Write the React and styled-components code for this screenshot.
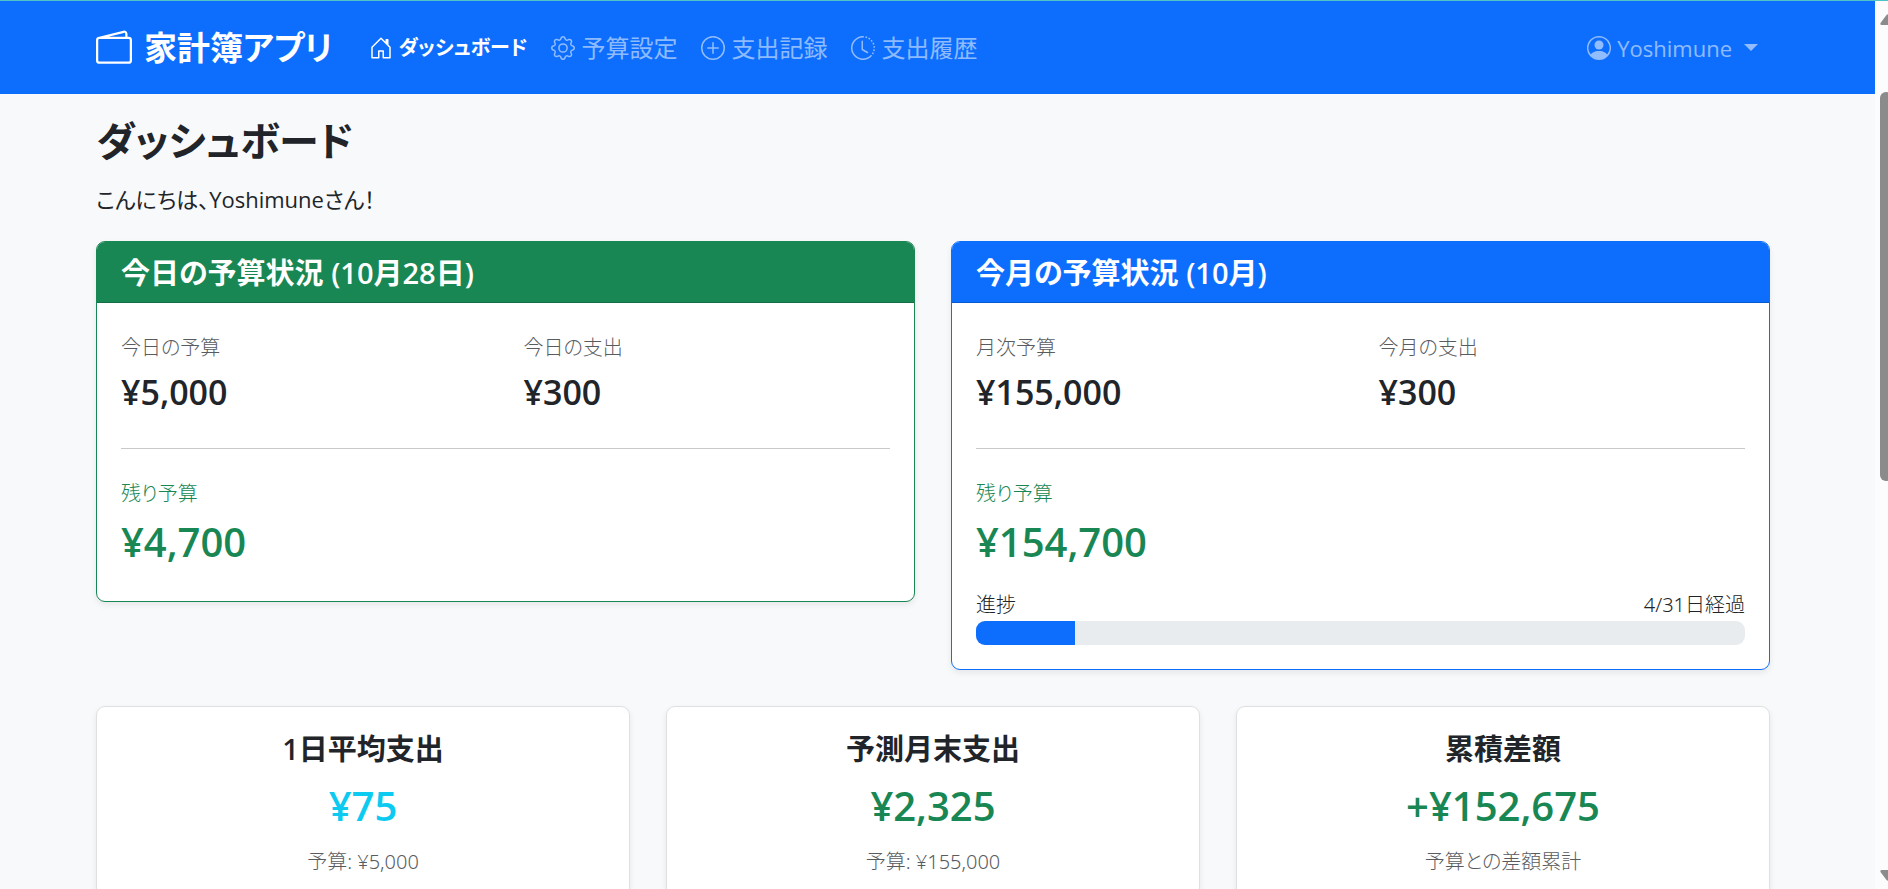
import React from 'react';
import styled, { createGlobalStyle } from 'styled-components';
import {
  BsWallet2,
  BsHouseDoor,
  BsGear,
  BsPlusCircle,
  BsClockHistory,
  BsPersonCircle,
} from 'react-icons/bs';

const color = {
  primary: '#0d6efd',
  success: '#198754',
  info: '#0dcaf0',
  text: '#212529',
  muted: '#595c5f',
};

const smallFont = '"Noto Sans", "Noto Sans CJK JP", sans-serif';

const GlobalStyle = createGlobalStyle`
  *, *::before, *::after { box-sizing: border-box; }
  body {
    margin: 0;
    background: #f8f9fb;
    color: ${color.text};
    font-family: "Open Sans", "Noto Sans CJK JP", sans-serif;
    font-size: 24px;
    line-height: 36px;
    font-feature-settings: "palt";
  }
  h1, h2, h3, p { margin: 0; }
`;

const Window = styled.div`
  display: flex;
  height: 100vh;
  border-top: 1px solid #4fc3c8;
  overflow: hidden;
`;

const Page = styled.div`
  flex: 1;
  min-width: 0;
  overflow-y: auto;
  scrollbar-width: none;
`;

const Container = styled.div`
  max-width: 1719px;
  margin: 0 auto;
  padding: 0 27px 0 18px;
`;

const Navbar = styled.header`
  background: ${color.primary};
  padding: 12px 0;
`;

const NavRow = styled(Container)`
  display: flex;
  align-items: center;
  height: 69px;
`;

const Brand = styled.a`
  display: flex;
  align-items: center;
  gap: 12px;
  margin-right: 24px;
  color: #fff;
  font-size: 33px;
  line-height: 54px;
  font-weight: 700;
  text-decoration: none;
  white-space: nowrap;

  svg {
    width: 36px;
    height: 36px;
  }
`;

const Nav = styled.nav`
  display: flex;
  flex: 1;
`;

const NavLink = styled.a`
  display: flex;
  align-items: center;
  gap: 6px;
  padding: 12px;
  color: ${(p) => (p.$active ? '#fff' : 'rgba(255, 255, 255, 0.55)')};
  font-size: ${(p) => (p.$active ? 20 : 24)}px;
  font-weight: ${(p) => (p.$active ? 700 : 400)};
  text-decoration: none;
  white-space: nowrap;

  svg {
    width: 24px;
    height: 24px;
  }
`;

const UserButton = styled.button`
  display: flex;
  align-items: center;
  gap: 6px;
  padding: 12px;
  border: 0;
  background: none;
  color: rgba(255, 255, 255, 0.55);
  font: inherit;
  font-size: 22px;
  cursor: pointer;

  svg {
    width: 24px;
    height: 24px;
  }
`;

const Caret = styled.span`
  margin-left: 6px;
  border-top: 7px solid;
  border-left: 7px solid transparent;
  border-right: 7px solid transparent;
`;

const Main = styled(Container).attrs({ as: 'main' })`
  padding-top: 18px;
  padding-bottom: 36px;
`;

const PageTitle = styled.h1`
  margin-bottom: 12px;
  font-size: 40px;
  line-height: 57px;
  font-weight: 600;
`;

const Greeting = styled.p`
  margin-bottom: 24px;
  font-size: 22px;
  line-height: 36px;
`;

const Columns = styled.div`
  display: grid;
  grid-template-columns: repeat(${(p) => p.$count}, minmax(0, 1fr));
  gap: 36px;
  align-items: start;
`;

const Section = styled.section`
  margin-bottom: 36px;
`;

const Card = styled.article`
  border: 1px solid ${(p) => p.$tone || '#dee0e2'};
  border-radius: 9px;
  background: #fff;
  box-shadow: 0 3px 6px rgba(0, 0, 0, 0.075);
  overflow: hidden;
`;

const CardHeader = styled.div`
  padding: 13px 24px 11px;
  border-bottom: 1px solid rgba(0, 0, 0, 0.175);
  background-color: ${(p) => p.$tone};
  color: #fff;
`;

const CardTitle = styled.h2`
  font-size: 29px;
  line-height: 36px;
  font-weight: 600;
`;

const CardBody = styled.div`
  padding: 24px;
`;

const StatBody = styled(CardBody)`
  text-align: center;
`;

const StatTitle = styled(CardTitle)`
  margin-bottom: 12px;
`;

const Label = styled.p`
  color: ${(p) => p.$tone || color.muted};
  font-family: ${smallFont};
  font-size: 20px;
  line-height: 42px;
  font-weight: 300;
`;

const Amount = styled.p`
  margin-bottom: 9px;
  color: ${(p) => p.$tone || color.text};
  font-size: ${(p) => (p.$large ? 40 : 34)}px;
  line-height: ${(p) => (p.$large ? 53 : 46)}px;
  font-weight: 600;
`;

const Divider = styled.hr`
  margin: 24px 0;
  border: 0;
  border-top: 1px solid #c8c9ca;
`;

const ProgressLabels = styled.div`
  display: flex;
  justify-content: space-between;
  margin-top: 21px;
  font-family: ${smallFont};
  font-size: 20px;
  line-height: 32px;
  font-weight: 300;
`;

const ProgressTrack = styled.div`
  height: 24px;
  border-radius: 9px;
  background: #e9ecef;
  overflow: hidden;
`;

const ProgressFill = styled.div`
  height: 100%;
  background: ${color.primary};
`;

const Scrollbar = styled.div`
  display: flex;
  flex: 0 0 13px;
  flex-direction: column;
  align-items: flex-start;
  padding: 13px 0 8px 5px;
  background: #fcfcfc;
  overflow: hidden;
`;

const ScrollArrow = styled.svg`
  flex: none;
  width: 16px;
  height: 11px;
  fill: #8b8b8b;
`;

const ScrollTrack = styled.div`
  flex: 1;
  padding-top: 67px;
`;

const ScrollThumb = styled.div`
  width: 12px;
  height: 50%;
  border-radius: 6px;
  background: #8b8b8b;
`;

const links = [
  { label: 'ダッシュボード', Icon: BsHouseDoor, active: true },
  { label: '予算設定', Icon: BsGear },
  { label: '支出記録', Icon: BsPlusCircle },
  { label: '支出履歴', Icon: BsClockHistory },
];

const stats = [
  { title: '1日平均支出', amount: '¥75', note: '予算: ¥5,000', tone: color.info },
  { title: '予測月末支出', amount: '¥2,325', note: '予算: ¥155,000', tone: color.success },
  { title: '累積差額', amount: '+¥152,675', note: '予算との差額累計', tone: color.success },
];

function BudgetCard({ tone, title, budget, spent, remaining, children }) {
  return (
    <Card $tone={tone}>
      <CardHeader $tone={tone}>
        <CardTitle>{title}</CardTitle>
      </CardHeader>
      <CardBody>
        <Columns $count={2}>
          {[budget, spent].map(([label, amount]) => (
            <div key={label}>
              <Label>{label}</Label>
              <Amount>{amount}</Amount>
            </div>
          ))}
        </Columns>
        <Divider />
        <Label $tone={color.success}>残り予算</Label>
        <Amount $large $tone={color.success}>{remaining}</Amount>
        {children}
      </CardBody>
    </Card>
  );
}

function Progress({ day, days }) {
  return (
    <>
      <ProgressLabels>
        <span id="progress-label">進捗</span>
        <span>{`${day}/${days}日経過`}</span>
      </ProgressLabels>
      <ProgressTrack
        role="progressbar"
        aria-labelledby="progress-label"
        aria-valuenow={day}
        aria-valuemin={0}
        aria-valuemax={days}
      >
        <ProgressFill style={{ width: `${(day / days) * 100}%` }} />
      </ProgressTrack>
    </>
  );
}

export default function App() {
  return (
    <Window>
      <GlobalStyle />
      <Page>
        <Navbar>
          <NavRow>
            <Brand href="#">
              <BsWallet2 />
              家計簿アプリ
            </Brand>
            <Nav>
              {links.map(({ label, Icon, active }) => (
                <NavLink key={label} href="#" $active={active}>
                  <Icon />
                  {label}
                </NavLink>
              ))}
            </Nav>
            <UserButton type="button" aria-haspopup="menu">
              <BsPersonCircle />
              Yoshimune
              <Caret />
            </UserButton>
          </NavRow>
        </Navbar>
        <Main>
          <PageTitle>ダッシュボード</PageTitle>
          <Greeting>こんにちは、Yoshimuneさん！</Greeting>
          <Section>
            <Columns $count={2}>
              <BudgetCard
                tone={color.success}
                title="今日の予算状況 (10月28日)"
                budget={['今日の予算', '¥5,000']}
                spent={['今日の支出', '¥300']}
                remaining="¥4,700"
              />
              <BudgetCard
                tone={color.primary}
                title="今月の予算状況 (10月)"
                budget={['月次予算', '¥155,000']}
                spent={['今月の支出', '¥300']}
                remaining="¥154,700"
              >
                <Progress day={4} days={31} />
              </BudgetCard>
            </Columns>
          </Section>
          <Columns $count={3}>
            {stats.map((s) => (
              <Card key={s.title}>
                <StatBody>
                  <StatTitle>{s.title}</StatTitle>
                  <Amount $large $tone={s.tone}>{s.amount}</Amount>
                  <Label>{s.note}</Label>
                </StatBody>
              </Card>
            ))}
          </Columns>
        </Main>
      </Page>
      <Scrollbar aria-hidden="true">
        <ScrollArrow viewBox="0 0 16 11">
          <path d="M6.5 1Q8 -.5 9.500 1L15.500 9Q16 11 14.500 11H1.500Q0 11 .5 9Z" />
        </ScrollArrow>
        <ScrollTrack>
          <ScrollThumb />
        </ScrollTrack>
        <ScrollArrow viewBox="0 0 16 11">
          <path d="M6.500 10Q8 11.500 9.500 10L15.500 2Q16 0 14.500 0H1.500Q0 0 .5 2Z" />
        </ScrollArrow>
      </Scrollbar>
    </Window>
  );
}
